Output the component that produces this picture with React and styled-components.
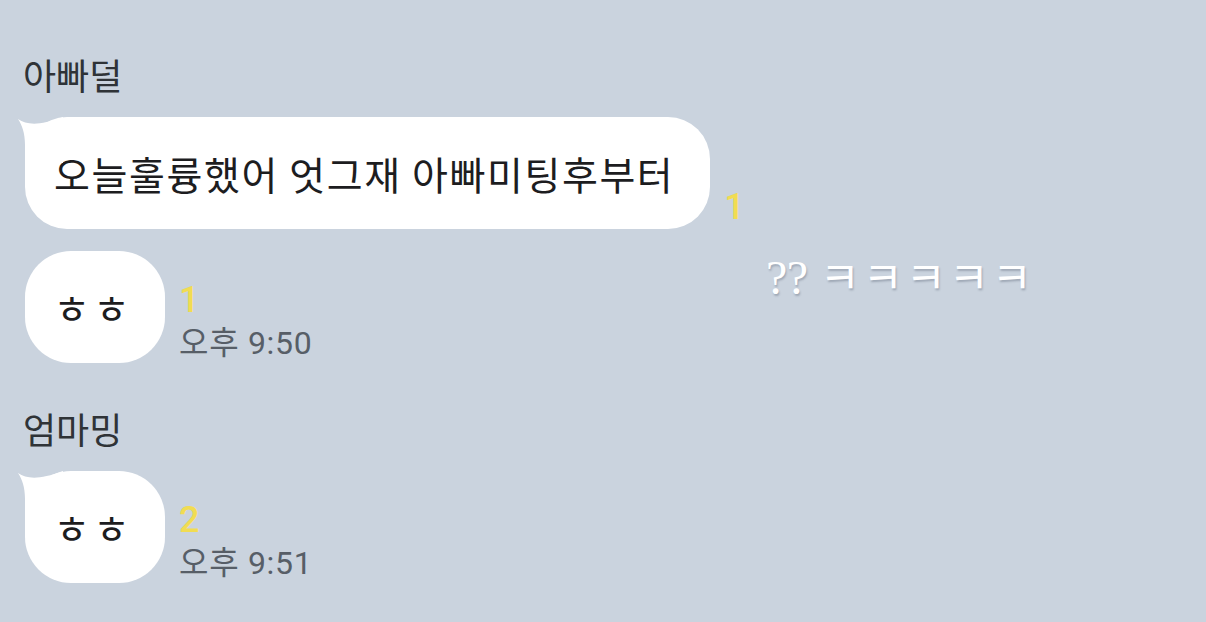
import React from "react";
import styled, { createGlobalStyle } from "styled-components";

const GlobalStyle = createGlobalStyle`
  html, body {
    margin: 0;
    padding: 0;
    background: #cad3de;
  }
  body {
    font-family: "Noto Sans CJK KR", "Noto Sans", sans-serif;
  }
`;

const Page = styled.div`
  position: relative;
  width: 1206px;
  height: 622px;
  box-sizing: border-box;
  padding: 53px 0 0 25px;
  background: #cad3de;
  display: flex;
  flex-direction: column;
  gap: 44px;
  overflow: hidden;
`;

const Group = styled.section`
  display: flex;
  flex-direction: column;
  gap: 22px;
`;

const Name = styled.div`
  font-family: "Noto Sans CJK KR", sans-serif;
  font-size: 36px;
  line-height: 42px;
  color: #2f3337;
  margin-left: -2px;
`;

const Row = styled.div`
  display: flex;
  align-items: flex-end;
`;

const Bubble = styled.div`
  position: relative;
  box-sizing: border-box;
  background: #ffffff;
  border-radius: ${(p) => (p.$compact ? "46px" : "42px")};
  padding: ${(p) => (p.$compact ? "35px 4px 35px 0" : "35px 36px 35px 29px")};
  width: ${(p) => (p.$compact ? "140px" : "auto")};
  text-align: center;
  font-family: "Noto Sans CJK KR", sans-serif;
  font-size: ${(p) => (p.$compact ? "40px" : "39px")};
  letter-spacing: ${(p) => (p.$compact ? "3px" : "1.6px")};
  line-height: 42px;
  color: #1d1d1f;
  white-space: nowrap;
`;

const Tail = styled.svg`
  position: absolute;
  left: -8px;
  top: 0;
  width: 50px;
  height: 46px;
`;

const Meta = styled.div`
  display: flex;
  flex-direction: column;
  gap: 9px;
  margin-left: 14px;
  padding-bottom: 4px;
`;

const Unread = styled.span`
  font-family: "Roboto", "Noto Sans", sans-serif;
  font-size: 36px;
  font-weight: 500;
  line-height: 36px;
  color: #f1dc52;
`;

const Time = styled.span`
  font-family: "Roboto", "Noto Sans CJK KR", sans-serif;
  font-size: 32px;
  letter-spacing: 0.7px;
  line-height: 32px;
  color: #575e67;
  white-space: nowrap;
`;

const Caption = styled.div`
  position: absolute;
  left: 766px;
  top: 250px;
  color: #ffffff;
  font-family: "Noto Sans CJK KR", sans-serif;
  font-size: 44px;
  letter-spacing: 2.5px;
  line-height: 50px;
  text-shadow: 1px 2px 2px rgba(60, 70, 90, 0.3);
  white-space: nowrap;
`;

const Question = styled.span`
  font-family: "Liberation Serif", serif;
  font-size: 48px;
  letter-spacing: -0.5px;
  margin-right: 12px;
`;

const TailShape = () => (
  <Tail viewBox="0 0 50 46" aria-hidden="true">
    <path
      d="M1 2 C10 8 22 9 46 0 L46 46 L8 46 L8 28 C8 16 5 8 1 2 Z"
      fill="#ffffff"
    />
  </Tail>
);

const Message = ({ text, tail, compact, unread, time }) => (
  <Row>
    <Bubble $compact={compact}>
      {tail && <TailShape />}
      {text}
    </Bubble>
    <Meta>
      {unread && <Unread>{unread}</Unread>}
      {time && <Time>{time}</Time>}
    </Meta>
  </Row>
);

export default function App() {
  return (
    <>
      <GlobalStyle />
      <Page>
        <Group>
          <Name>아빠덜</Name>
          <Message text="오늘훌륭했어 엇그재 아빠미팅후부터" tail unread="1" />
          <Message text="ㅎㅎ" compact unread="1" time="오후 9:50" />
        </Group>
        <Group>
          <Name>엄마밍</Name>
          <Message text="ㅎㅎ" tail compact unread="2" time="오후 9:51" />
        </Group>
        <Caption>
          <Question>??</Question>ㅋㅋㅋㅋㅋ
        </Caption>
      </Page>
    </>
  );
}
